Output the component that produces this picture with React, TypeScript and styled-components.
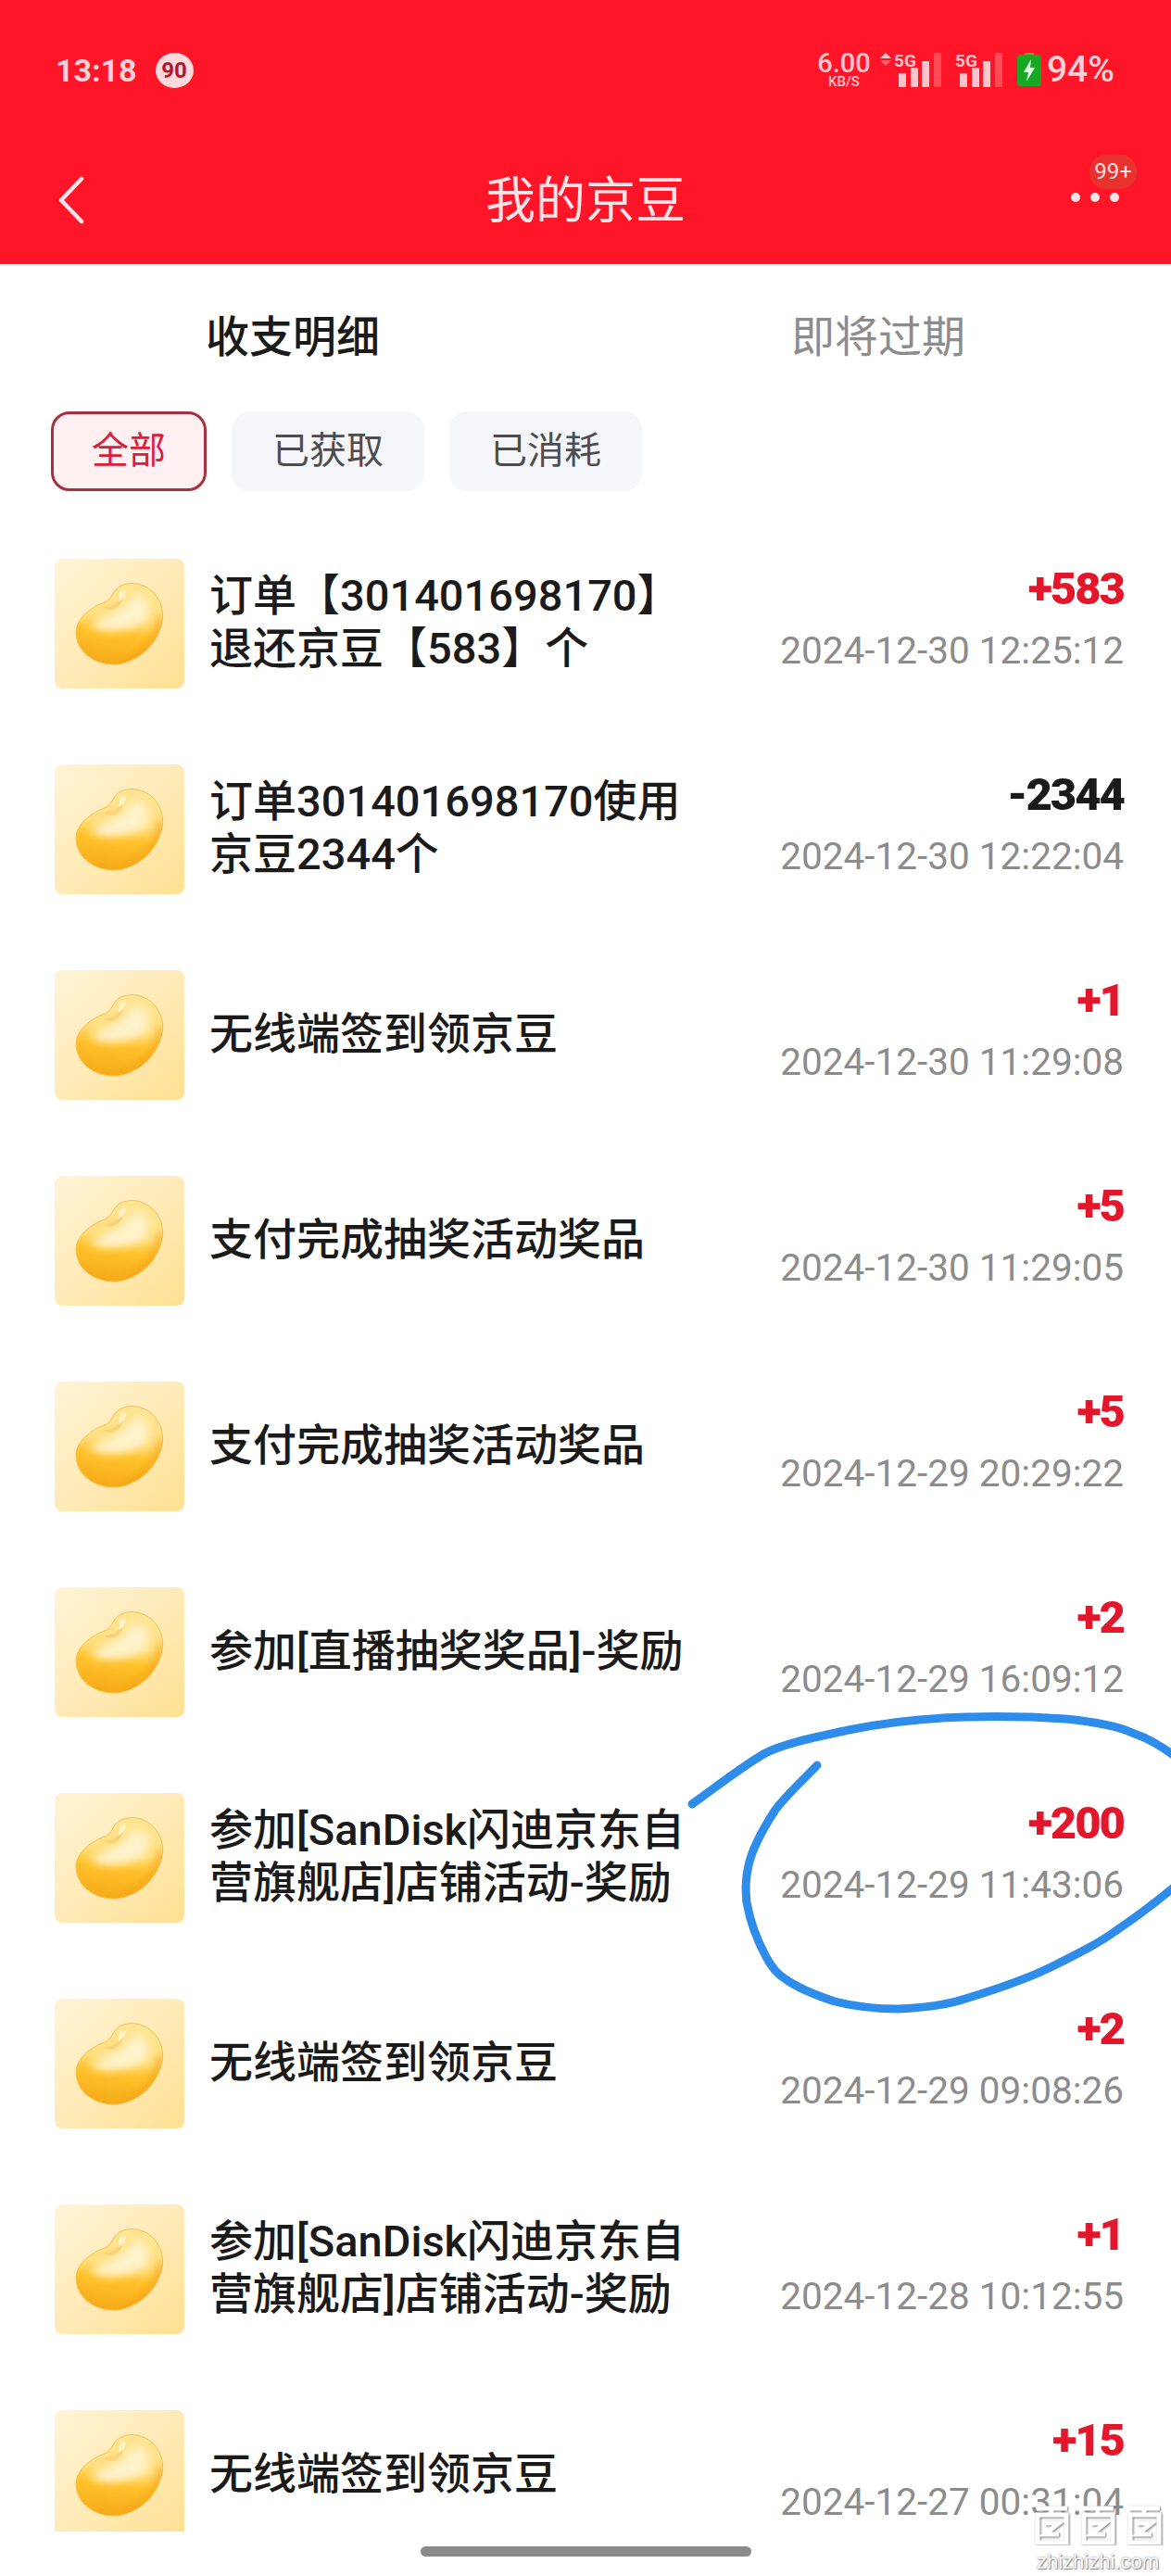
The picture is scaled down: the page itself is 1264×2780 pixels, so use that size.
import React from 'react'
import styled, { createGlobalStyle } from 'styled-components'

const FONT = 'Roboto, "Noto Sans CJK SC", sans-serif'

const GlobalStyle = createGlobalStyle`
  html, body {
    margin: 0;
    padding: 0;
    background: #fff;
    font-family: ${FONT};
  }
`

const Page = styled.div`
  position: relative;
  width: 1264px;
  height: 2780px;
  display: flex;
  flex-direction: column;
  overflow: hidden;
  background: #fff;
`

const Header = styled.header`
  flex: none;
  height: 285px;
  background: #ff1528;
  color: #ffe3e6;
  border-bottom: 1px solid #e0303f;
  box-sizing: border-box;
`

const StatusBar = styled.div`
  height: 152px;
  box-sizing: border-box;
  padding: 0 61px 0 60px;
  display: flex;
  align-items: center;
  justify-content: space-between;
`

const StatusLeft = styled.div`
  display: flex;
  align-items: center;
  gap: 20px;
`

const Clock = styled.span`
  font-size: 34px;
  font-weight: 700;
  color: #ffd0d5;
`

const LevelBadge = styled.span`
  width: 41px;
  height: 38px;
  border-radius: 50%;
  background: #ffd9dc;
  color: #b5142a;
  font-size: 24px;
  font-weight: 700;
  display: flex;
  align-items: center;
  justify-content: center;
`

const StatusRight = styled.div`
  display: flex;
  align-items: center;
  margin-top: -2px;
`

const Speed = styled.div`
  width: 58px;
  margin-right: 9px;
  display: flex;
  flex-direction: column;
  align-items: center;
  color: #ffc5cb;
  font-weight: 500;
`

const SpeedValue = styled.span`
  font-size: 29px;
  line-height: 25px;
`

const SpeedUnit = styled.span`
  font-size: 15px;
  line-height: 14px;
`

const SignalSvg = styled.svg<{ $gap: number }>`
  margin-top: -4px;
  margin-right: ${p => p.$gap}px;
`

const Percent = styled.span`
  margin-left: 6px;
  font-size: 39px;
  line-height: 40px;
  font-weight: 500;
  color: #ffd0d5;
`

const NavBar = styled.div`
  position: relative;
  height: 129px;
  box-sizing: border-box;
  display: grid;
  grid-template-columns: 1fr auto 1fr;
  align-items: center;
  padding: 0 39px 0 39px;
`

const BackButton = styled.div`
  padding-left: 23px;
  margin-top: -2px;
  display: flex;
`

const Title = styled.h1`
  margin: 0;
  padding-top: 2px;
  font-size: 54px;
  font-weight: 400;
  line-height: 60px;
`

const MoreButton = styled.div`
  position: relative;
  justify-self: end;
  width: 74px;
  height: 10px;
  margin-top: -8px;
  display: flex;
  gap: 11px;
  margin-right: -5px;
`

const Dot = styled.i`
  width: 10px;
  height: 10px;
  border-radius: 50%;
  background: #ffe3e6;
`

const CountBadge = styled.span`
  position: absolute;
  right: 3px;
  top: -41px;
  width: 51px;
  height: 37px;
  border-radius: 18px;
  background: #e8322e;
  color: #ffdfe0;
  font-size: 24px;
  display: flex;
  align-items: center;
  justify-content: center;
`

const Tabs = styled.div`
  flex: none;
  height: 156px;
  display: grid;
  grid-template-columns: 1fr 1fr;
  align-items: center;
  padding-bottom: 8px;
  box-sizing: border-box;
`

const Tab = styled.div<{ $active?: boolean }>`
  text-align: center;
  font-size: 47px;
  font-weight: ${p => (p.$active ? 500 : 400)};
  color: ${p => (p.$active ? '#1a1a1a' : '#8c8c8c')};
`

const Filters = styled.div`
  flex: none;
  display: flex;
  gap: 27px;
  padding: 3px 0 32px 55px;
`

const Filter = styled.div<{ $active?: boolean }>`
  height: 86px;
  padding: 0 41px 8px;
  box-sizing: border-box;
  border-radius: 20px;
  display: flex;
  align-items: center;
  font-size: 40px;
  background: ${p => (p.$active ? '#fff0f1' : '#f5f6fa')};
  border: 3px solid ${p => (p.$active ? '#a8303f' : '#f5f6fa')};
  color: ${p => (p.$active ? '#d8203a' : '#4d4d4d')};
`

const List = styled.div`
  flex: 1;
  min-height: 0;
  overflow: hidden;
`

const Row = styled.div`
  height: 222px;
  box-sizing: border-box;
  padding: 0 54px 0 59px;
  display: flex;
  align-items: center;
`

const Tile = styled.div`
  flex: none;
  width: 140px;
  height: 140px;
  border-radius: 8px;
  background: linear-gradient(135deg, #fff4d6 0%, #ffeab5 55%, #ffe092 100%);
`

const RowText = styled.div`
  width: 520px;
  margin-left: 27px;
  padding-bottom: 4px;
  font-size: 47px;
  line-height: 57px;
  font-weight: 500;
  color: #1a1a1a;
`

const RowRight = styled.div`
  flex: 1;
  margin-right: -3px;
  padding-bottom: 9px;
  display: flex;
  flex-direction: column;
  align-items: flex-end;
`

const Amount = styled.div<{ $negative?: boolean }>`
  font-size: 49px;
  line-height: 66px;
  font-weight: 900;
  letter-spacing: -2px;
  color: ${p => (p.$negative ? '#1a1a1a' : '#e2172b')};
`

const DateText = styled.div`
  font-size: 40.5px;
  line-height: 66px;
  color: #8c8c8c;
`

const HomeArea = styled.div`
  flex: none;
  height: 48px;
  display: flex;
  justify-content: center;
  padding-top: 16px;
  box-sizing: border-box;
  background: #fff;
`

const HomeBar = styled.div`
  width: 357px;
  height: 11px;
  border-radius: 6px;
  background: #8a8a8a;
`

const Scribble = styled.svg`
  position: absolute;
  left: 0;
  top: 0;
  pointer-events: none;
`

const Watermark = styled.div`
  position: absolute;
  left: 1115px;
  top: 2703px;
  width: 140px;
  display: flex;
  flex-direction: column;
  align-items: center;
  gap: 8px;
`

const WatermarkLogos = styled.div`
  display: flex;
  gap: 9px;
`

const WatermarkText = styled.span`
  font-family: "Liberation Sans", sans-serif;
  font-size: 22px;
  line-height: 20px;
  color: #fff;
  text-shadow: 0 0 2px #777, 1px 1px 1px #888;
`

const rows = [
  { text: '订单【301401698170】退还京豆【583】个', amount: '+583', date: '2024-12-30 12:25:12' },
  { text: '订单301401698170使用京豆2344个', amount: '-2344', date: '2024-12-30 12:22:04' },
  { text: '无线端签到领京豆', amount: '+1', date: '2024-12-30 11:29:08' },
  { text: '支付完成抽奖活动奖品', amount: '+5', date: '2024-12-30 11:29:05' },
  { text: '支付完成抽奖活动奖品', amount: '+5', date: '2024-12-29 20:29:22' },
  { text: '参加[直播抽奖奖品]-奖励', amount: '+2', date: '2024-12-29 16:09:12' },
  { text: '参加[SanDisk闪迪京东自营旗舰店]店铺活动-奖励', amount: '+200', date: '2024-12-29 11:43:06' },
  { text: '无线端签到领京豆', amount: '+2', date: '2024-12-29 09:08:26' },
  { text: '参加[SanDisk闪迪京东自营旗舰店]店铺活动-奖励', amount: '+1', date: '2024-12-28 10:12:55' },
  { text: '无线端签到领京豆', amount: '+15', date: '2024-12-27 00:31:04' },
]

const BEAN_PATH =
  'M23 79C24 64 38 53 54 47C62 44 62 35 70 30C80 24 96 26 106 36C116 46 119 60 115 72C110 90 96 106 76 112C58 118 38 110 29 98C25 92 23 85 23 79Z'

const Bean = () => (
  <svg width="140" height="140" viewBox="0 0 140 140">
    <defs>
      <linearGradient id="beanFill" x1="0.55" y1="0" x2="0.4" y2="1">
        <stop offset="0" stopColor="#ffe596" />
        <stop offset="0.42" stopColor="#ffdf80" />
        <stop offset="0.62" stopColor="#ffc22b" />
        <stop offset="1" stopColor="#f6aa1a" />
      </linearGradient>
      <clipPath id="beanClip">
        <path d={BEAN_PATH} />
      </clipPath>
      <filter id="beanBlur" x="-30%" y="-30%" width="160%" height="160%">
        <feGaussianBlur stdDeviation="5" />
      </filter>
    </defs>
    <path d={BEAN_PATH} fill="url(#beanFill)" stroke="#f5c04a" strokeWidth="1" />
    <g clipPath="url(#beanClip)">
      <path
        d="M38 72C50 62 68 60 78 48C84 40 92 36 98 44C106 54 100 70 84 74C68 78 50 80 38 72Z"
        fill="#fff3cc"
        filter="url(#beanBlur)"
      />
      <path
        d="M116 62C112 88 96 106 72 114"
        stroke="#f5a412"
        strokeWidth="7"
        fill="none"
        filter="url(#beanBlur)"
      />
    </g>
    <path d="M52 52C62 52 70 48 73 38C75 46 70 54 60 55Z" fill="#f5c765" opacity="0.55" />
    <path d="M70 37C72 33 76 33 77 36C75 42 72 44 69 46Z" fill="#fff4d2" opacity="0.9" />
  </svg>
)

const Chevron = () => (
  <svg width="30" height="52" viewBox="0 0 30 52">
    <path d="M26 3L4 26L26 49" fill="none" stroke="#ffe3e6" strokeWidth="4.5" strokeLinecap="round" strokeLinejoin="round" />
  </svg>
)

const Signal = ({ arrows, gap }: { arrows?: boolean; gap: number }) => (
  <SignalSvg $gap={gap} width={arrows ? 67 : 51} height="41" viewBox={`${arrows ? -16 : 0} -4 ${arrows ? 67 : 51} 41`}>
    {arrows && (
      <g>
        <path d="M-15 6L-9 0L-3 6Z" fill="#ffc5cb" />
        <path d="M-15 8L-9 14L-3 8Z" fill="#ff6673" />
      </g>
    )}
    <text x="0" y="15" fontFamily={FONT} fontSize="19" fontWeight="700" fill="#ffc5cb">
      5G
    </text>
    <rect x="5" y="22" width="8" height="15" rx="1" fill="#ffc5cb" />
    <rect x="18" y="16" width="8" height="21" rx="1" fill="#ffc5cb" />
    <rect x="30" y="9" width="8" height="28" rx="1" fill="#ffc5cb" />
    <rect x="43" y="0" width="8" height="37" rx="1" fill="#ff4a58" />
  </SignalSvg>
)

const Battery = () => (
  <svg width="26" height="36" viewBox="0 0 26 36">
    <rect x="8" y="0" width="10" height="3" rx="1" fill="#6fae2a" />
    <rect x="0" y="2" width="26" height="34" rx="4" fill="#19a824" />
    <path d="M15 7L7 21H12L10 31L19 16H14Z" fill="#eafff0" />
  </svg>
)

const WatermarkLogo = () => (
  <svg width="41" height="44" viewBox="0 0 41 44">
    <g fill="none" stroke="#fff" strokeWidth="5" style={{ filter: 'drop-shadow(1px 1px 1px #777)' }}>
      <path d="M4 4H37M20 4V11" />
      <path d="M5 11H36V41H5Z" />
      <path d="M13 20H28L13 32H28" />
    </g>
  </svg>
)

export default function App() {
  return (
    <Page>
      <GlobalStyle />
      <Header>
        <StatusBar>
          <StatusLeft>
            <Clock>13:18</Clock>
            <LevelBadge>90</LevelBadge>
          </StatusLeft>
          <StatusRight>
            <Speed>
              <SpeedValue>6.00</SpeedValue>
              <SpeedUnit>KB/S</SpeedUnit>
            </Speed>
            <Signal arrows gap={15} />
            <Signal gap={16} />
            <Battery />
            <Percent>94%</Percent>
          </StatusRight>
        </StatusBar>
        <NavBar>
          <BackButton>
            <Chevron />
          </BackButton>
          <Title>我的京豆</Title>
          <MoreButton>
            <Dot />
            <Dot />
            <Dot />
            <CountBadge>99+</CountBadge>
          </MoreButton>
        </NavBar>
      </Header>
      <Tabs>
        <Tab $active>收支明细</Tab>
        <Tab>即将过期</Tab>
      </Tabs>
      <Filters>
        <Filter $active>全部</Filter>
        <Filter>已获取</Filter>
        <Filter>已消耗</Filter>
      </Filters>
      <List>
        {rows.map(r => (
          <Row key={r.date}>
            <Tile>
              <Bean />
            </Tile>
            <RowText>{r.text}</RowText>
            <RowRight>
              <Amount $negative={r.amount.startsWith('-')}>{r.amount}</Amount>
              <DateText>{r.date}</DateText>
            </RowRight>
          </Row>
        ))}
      </List>
      <HomeArea>
        <HomeBar />
      </HomeArea>
      <Scribble width="1264" height="2780" viewBox="0 0 1264 2780">
        <g fill="none" stroke="#2e8ceb" strokeWidth="9" strokeLinecap="round" strokeLinejoin="round">
          <path d="M747 1947C775 1927 800 1907 826 1892C850 1880 885 1874 916 1867C960 1858 1000 1854 1042 1853C1080 1852 1120 1853 1150 1855C1180 1858 1205 1862 1222 1870C1240 1876 1252 1884 1268 1895" />
          <path d="M882 1905C865 1923 850 1936 837 1953C822 1976 812 1995 808 2013C804 2030 805 2042 806 2053C810 2075 818 2095 826 2110C832 2122 838 2130 848 2136C862 2146 880 2153 901 2160C925 2166 950 2168 970 2168C995 2167 1018 2165 1042 2157C1075 2147 1105 2137 1132 2124C1160 2110 1185 2098 1204 2084C1225 2070 1245 2055 1268 2036" />
        </g>
      </Scribble>
      <Watermark>
        <WatermarkLogos>
          <WatermarkLogo />
          <WatermarkLogo />
          <WatermarkLogo />
        </WatermarkLogos>
        <WatermarkText>zhizhizhi.com</WatermarkText>
      </Watermark>
    </Page>
  )
}
